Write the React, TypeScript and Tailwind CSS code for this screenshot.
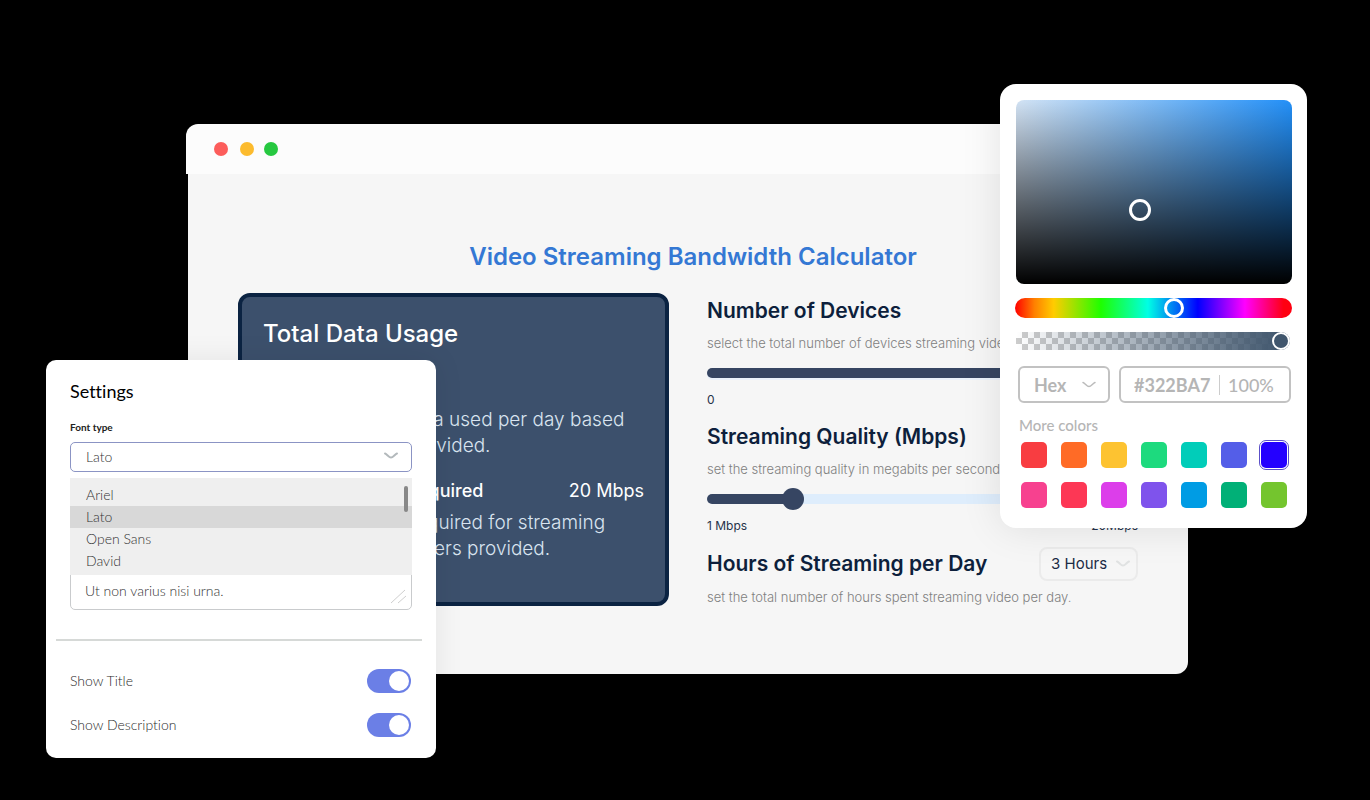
import { useState } from "react";

const FONTS = ["Ariel", "Lato", "Open Sans", "David"];

const SWATCHES = [
  { name: "Red", color: "bg-[#f83d41]" },
  { name: "Orange", color: "bg-[#ff6b26]" },
  { name: "Yellow", color: "bg-[#fdc331]" },
  { name: "Green", color: "bg-[#1dda7e]" },
  { name: "Teal", color: "bg-[#01cdb9]" },
  { name: "Indigo", color: "bg-[#545ee8]" },
  { name: "Blue", color: "bg-[#2400ff]" },
  { name: "Pink", color: "bg-[#f7418f]" },
  { name: "Crimson", color: "bg-[#fd3755]" },
  { name: "Magenta", color: "bg-[#dc3eea]" },
  { name: "Violet", color: "bg-[#7f53ec]" },
  { name: "Sky", color: "bg-[#009ce4]" },
  { name: "Emerald", color: "bg-[#01b077]" },
  { name: "Lime", color: "bg-[#74c52e]" },
];

function Chevron({ className }: { className: string }) {
  return (
    <svg viewBox="0 0 14 8" fill="none" stroke="currentColor" strokeLinecap="round" strokeLinejoin="round" className={className} aria-hidden="true">
      <path d="M1 1.5C3 2.2 5 5.6 7 5.6S11 2.2 13 1.5" />
    </svg>
  );
}

const sliderBase =
  "block h-7 w-full cursor-pointer appearance-none bg-transparent outline-none [&::-webkit-slider-runnable-track]:h-[10px] [&::-webkit-slider-runnable-track]:rounded-full [&::-webkit-slider-thumb]:mt-[-6px] [&::-webkit-slider-thumb]:size-[22px] [&::-webkit-slider-thumb]:appearance-none [&::-webkit-slider-thumb]:rounded-full [&::-webkit-slider-thumb]:bg-[#364562]";

function SliderField(props: {
  id: string;
  title: string;
  hint: string;
  min: number;
  max: number;
  step: number;
  value: number;
  low: string;
  high: string;
  track: string;
}) {
  const [value, setValue] = useState(props.value);
  return (
    <section>
      <label htmlFor={props.id} className="block text-[21px] leading-8 font-semibold text-[#0d1f3c]">
        {props.title}
      </label>
      <p className="text-[13px] leading-8 font-light whitespace-nowrap text-[#808080]">{props.hint}</p>
      <input
        id={props.id}
        type="range"
        min={props.min}
        max={props.max}
        step={props.step}
        value={value}
        onChange={(e) => setValue(Number(e.target.value))}
        className={`${sliderBase} ${props.track}`}
      />
      <div className="flex justify-between text-xs leading-[26px] text-[#26334a]">
        <span>{props.low}</span>
        <span>{props.high}</span>
      </div>
    </section>
  );
}

function CalculatorWindow() {
  return (
    <main className="font-[Inter,sans-serif]">
      <div className="flex h-[50px] items-center rounded-t-xl bg-[#fcfcfc] pl-7">
        <span className="size-3.5 rounded-full bg-[#fc5d5b]" />
        <span className="ml-3 size-3.5 rounded-full bg-[#fcbb2e]" />
        <span className="ml-2.5 size-3.5 rounded-full bg-[#26c840]" />
      </div>
      <div className="ml-0.5 rounded-b-xl bg-[#f6f6f6] px-[50px] pt-[67px] pb-[61px]">
        <h1 className="mb-5 pl-2.5 text-center text-2xl leading-8 font-semibold text-[#3478d4]">
          Video Streaming Bandwidth Calculator
        </h1>
        <div className="grid grid-cols-2 items-start gap-x-[38px]">
          <section className="rounded-xl border-4 border-[#0b2342] bg-[#3c506c] px-[21px] pt-[21px] pb-10 text-white">
            <h2 className="text-2xl leading-8 font-medium">Total Data Usage</h2>
            <p className="mt-[57px] text-[19px] leading-[26px] font-light whitespace-nowrap text-[#d9e4f0]">
              Total amount of data used per day based
              <br />
              on the numbers provided.
            </p>
            <div className="mt-4 mb-[3px] flex justify-between text-lg leading-8">
              <h3 className="font-medium">Total Bandwidth Required</h3>
              <span>20 Mbps</span>
            </div>
            <p className="text-[19px] leading-[26px] font-light whitespace-nowrap text-[#d9e4f0]">
              Total bandwidth required for streaming
              <br />
              based on the numbers provided.
            </p>
          </section>

          <div className="flex flex-col gap-2 pt-0.5">
            <SliderField
              id="devices"
              title="Number of Devices"
              hint="select the total number of devices streaming video"
              min={0}
              max={10}
              step={1}
              value={10}
              low="0"
              high="10"
              track="[&::-webkit-slider-runnable-track]:bg-[#364562] [&::-webkit-slider-runnable-track]:shadow-[0_2px_0_#eaf2fb]"
            />
            <SliderField
              id="quality"
              title="Streaming Quality (Mbps)"
              hint="set the streaming quality in megabits per second"
              min={1}
              max={20}
              step={0.5}
              value={4.5}
              low="1 Mbps"
              high="20Mbps"
              track="[&::-webkit-slider-runnable-track]:bg-[linear-gradient(to_right,#364562_20%,#deedfc_20%)]"
            />
            <section>
              <div className="flex h-[34px] items-center justify-between">
                <label htmlFor="hours" className="text-[21px] font-semibold text-[#0d1f3c]">
                  Hours of Streaming per Day
                </label>
                <div className="relative">
                  <select
                    id="hours"
                    defaultValue="3 Hours"
                    className="h-[34px] w-[99px] appearance-none rounded-lg border-2 border-[#ebebeb] bg-transparent pl-2.5 text-[15px] text-[#1c2b45]"
                  >
                    <option>1 Hour</option>
                    <option>3 Hours</option>
                    <option>5 Hours</option>
                  </select>
                  <Chevron className="pointer-events-none absolute top-[13px] right-2 h-2 w-3.5 stroke-2 text-[#e0e2e2]" />
                </div>
              </div>
              <p className="text-[13px] leading-8 font-light whitespace-nowrap text-[#808080]">
                set the total number of hours spent streaming video per day.
              </p>
            </section>
          </div>
        </div>
      </div>
    </main>
  );
}

function Toggle({ id, label }: { id: string; label: string }) {
  return (
    <div className="flex h-6 items-center justify-between">
      <label htmlFor={id} className="text-sm font-light text-[#2b2b2b]">
        {label}
      </label>
      <input
        id={id}
        type="checkbox"
        role="switch"
        defaultChecked
        className="h-6 w-11 cursor-pointer appearance-none rounded-full bg-gray-300 p-0.5 before:block before:size-5 before:rounded-full before:bg-white checked:bg-[#6b7fe6] checked:before:ml-5"
      />
    </div>
  );
}

function SettingsPanel() {
  const [font, setFont] = useState("Lato");
  return (
    <aside className="absolute top-[360px] left-[46px] w-[390px] rounded-[10px] bg-white pt-[19px] pb-[21px] font-[Lato,sans-serif] shadow-[0_0_30px_rgba(0,0,0,0.08)] [font-variant-ligatures:none]">
      <div className="px-6">
        <h2 className="text-lg leading-6 text-black">Settings</h2>
        <label htmlFor="font-type" className="mt-4 block text-[10px] leading-4 font-bold text-[#222]">
          Font type
        </label>
        <div className="relative z-10 mt-[7px]">
          <select
            id="font-type"
            value={font}
            onChange={(e) => setFont(e.target.value)}
            className="block h-[30px] w-[342px] appearance-none rounded-[5px] border border-[#8b94c4] bg-white px-[15px] text-sm font-light text-[#333]"
          >
            {FONTS.map((f) => (
              <option key={f}>{f}</option>
            ))}
          </select>
          <Chevron className="pointer-events-none absolute top-2.5 right-3.5 h-2 w-3.5 stroke-2 text-[#b3b9bc]" />
          <div className="absolute top-9 left-0 w-[342px] bg-[#efefef] pt-1.5 pb-[3px]">
            <ul>
              {FONTS.map((f) => (
                <li key={f}>
                  <button
                    type="button"
                    onClick={() => setFont(f)}
                    className={`block h-[22px] w-full px-4 text-left text-sm font-light text-[#333] ${f === font ? "bg-[#d8d8d8]" : ""}`}
                  >
                    {f}
                  </button>
                </li>
              ))}
            </ul>
            <span className="absolute top-2 right-1 h-[26px] w-1 rounded-full bg-[#888]" />
          </div>
        </div>
        <div className="relative mt-[78px] w-[342px]">
          <textarea
            aria-label="Description"
            defaultValue="Ut non varius nisi urna."
            className="block h-[60px] w-full resize-none rounded-[5px] border border-[#c9cbcd] bg-white px-3.5 pt-[30px] text-sm font-light text-[#333]"
          />
          <svg viewBox="0 0 16 16" className="absolute right-1.5 bottom-1.5 size-4 stroke-[#cfcfcf]" fill="none" aria-hidden="true">
            <path d="M1 15 15 2M8 15 16 8" />
          </svg>
        </div>
      </div>
      <hr className="mt-[29px] mr-3.5 ml-2.5 border-t-2 border-[#d6d9d7]" />
      <div className="mt-7 flex flex-col gap-5 pr-[25px] pl-6">
        <Toggle id="show-title" label="Show Title" />
        <Toggle id="show-description" label="Show Description" />
      </div>
    </aside>
  );
}

function ColorPicker() {
  const [selected, setSelected] = useState("Blue");
  return (
    <aside className="absolute top-[84px] right-[63px] w-[307px] rounded-2xl bg-white pt-4 pr-[15px] pb-[18px] pl-4 font-[Lato,sans-serif] shadow-[0_0_40px_rgba(0,0,0,0.1)]">
      <div className="relative h-[184px] rounded-lg bg-[linear-gradient(to_top,#000,transparent),linear-gradient(to_right,#d3e3f4,#2390f8)]">
        <span className="absolute top-[99px] left-[113px] size-[22px] rounded-full border-[3px] border-white" />
      </div>
      <input
        aria-label="Hue"
        type="range"
        defaultValue={58}
        className="mt-3.5 -ml-px block h-5 w-[277px] appearance-none rounded-full bg-[linear-gradient(to_right,#f00,#ff8000_7%,#fc0_14%,#1eff00_31%,#00ffe5_48%,#00f_66%,#f0f_83%,#f01_97%)] [&::-webkit-slider-thumb]:size-5 [&::-webkit-slider-thumb]:appearance-none [&::-webkit-slider-thumb]:rounded-full [&::-webkit-slider-thumb]:border-[3px] [&::-webkit-slider-thumb]:border-white"
      />
      <input
        aria-label="Opacity"
        type="range"
        defaultValue={100}
        className="mt-3.5 block h-[18px] w-[274px] appearance-none rounded-r-full bg-[linear-gradient(to_right,transparent,#40566d_97%),repeating-conic-gradient(#ccc_0_25%,#fff_0_50%)] bg-[length:100%_100%,12px_12px] [&::-webkit-slider-thumb]:size-[18px] [&::-webkit-slider-thumb]:appearance-none [&::-webkit-slider-thumb]:rounded-full [&::-webkit-slider-thumb]:border-2 [&::-webkit-slider-thumb]:border-white [&::-webkit-slider-thumb]:bg-[#40566d]"
      />
      <div className="mt-4 ml-0.5 flex h-[37px] gap-[9px] text-lg font-bold text-[#b5b5b5]">
        <div className="relative w-[92px]">
          <select aria-label="Colour format" className="h-full w-full appearance-none rounded-md border-2 border-[#c2c2c2] bg-white pl-3.5 text-[#b5b5b5]">
            <option>Hex</option>
            <option>RGB</option>
          </select>
          <Chevron className="pointer-events-none absolute top-[15px] right-3.5 h-2 w-3.5 stroke-[1.5] text-[#bbb]" />
        </div>
        <div className="flex w-[172px] items-center rounded-md border-2 border-[#c2c2c2] pl-[13px]">
          <input aria-label="Colour value" defaultValue="#322BA7" className="w-[86px] border-r border-[#ccc] leading-5 outline-none" />
          <input aria-label="Opacity value" defaultValue="100%" className="w-[62px] pl-2 leading-5 font-medium outline-none" />
        </div>
      </div>
      <p className="mt-3 ml-[3px] text-[15px] leading-5 font-medium text-[#b5b5b5]">More colors</p>
      <div className="mt-[5px] ml-[3px] grid grid-cols-[repeat(7,30px)] gap-[10px]">
        {SWATCHES.map((s) => (
          <button
            key={s.name}
            type="button"
            aria-label={s.name}
            onClick={() => setSelected(s.name)}
            className={`size-[30px] rounded-[7px] border p-px ${s.name === selected ? "border-[#5c50c8]" : "border-transparent"}`}
          >
            <span className={`block size-[26px] rounded-[5px] ${s.color}`} />
          </button>
        ))}
      </div>
    </aside>
  );
}

export default function App() {
  return (
    <div className="relative min-h-screen overflow-hidden bg-black pt-[124px] pr-[182px] pb-10 pl-[186px]">
      <CalculatorWindow />
      <SettingsPanel />
      <ColorPicker />
    </div>
  );
}
